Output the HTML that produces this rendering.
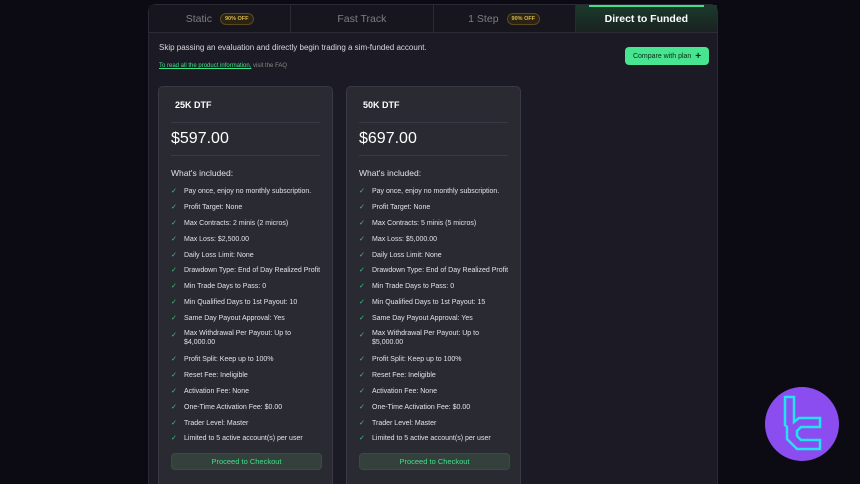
<!DOCTYPE html><html><head><style>
*{margin:0;padding:0;box-sizing:border-box}
html,body{width:860px;height:484px;overflow:hidden}
body{background:#0c0b13;font-family:"Liberation Sans",sans-serif;position:relative;color:#e6e6ea}
.panel{position:absolute;left:148px;top:4px;width:570px;height:490px;background:#1c1b25;border-radius:8px;border:1px solid #2a2a34}
.tabs{position:absolute;left:0;top:0;width:568px;height:28px;border-bottom:1px solid #2c2c36;display:flex}
.tab{flex:1;display:flex;align-items:center;justify-content:center;font-size:10.5px;color:#7d7d86;border-right:1px solid #2a2a33;background:#17161f}
.tab:last-child{border-right:none;color:#fff;font-weight:bold;background:linear-gradient(#1b3a2c,#1a2220);position:relative}
.tab:last-child:before{content:"";position:absolute;top:0;left:13px;right:13px;height:2px;background:#3fe08a}
.off{font-size:5.5px;color:#d9b84d;border:1px solid #5a4a1e;background:#2a2415;border-radius:8px;padding:2px 4px;margin-left:8px;font-weight:bold}
.desc{position:absolute;left:10px;top:38px;font-size:8px;color:#d8d8dd}
.faq{position:absolute;left:10px;top:58px;font-size:6px;color:#888}
.faq u{color:#3fe08a}
.cmp{position:absolute;left:476px;top:42px;width:84px;height:18px;background:#47e58f;border-radius:4px;color:#0d2a18;font-size:7px;display:flex;align-items:center;justify-content:center}
.card{position:absolute;top:86px;width:175px;height:420px;background:#2a2a33;border:1px solid #3a3a44;border-radius:5px}
.card h3{position:absolute;left:16px;top:13px;font-size:9px;color:#fff}
.hr{position:absolute;left:12px;right:12px;height:1px;background:#3a3a44}
.price{position:absolute;left:12px;top:43px;font-size:16px;color:#fff}
.inc{position:absolute;left:12px;top:81px;font-size:8.5px;color:#e0e0e4}
ul{position:absolute;left:12px;top:97px;width:158px;list-style:none}
li{font-size:7px;color:#e2e2e6;height:15.9px;line-height:15.9px;padding-left:13px;position:relative;white-space:nowrap}
li.two{height:25px;line-height:8.5px;padding-top:3px;white-space:normal}
li:before{content:"✓";position:absolute;left:0;top:0;color:#3fc77c;font-size:7px}
li.two:before{top:5px}
.btn{position:absolute;left:12px;top:366px;width:151px;height:17px;background:#34403b;border:1px solid #3e4a44;border-radius:4px;color:#3fe08a;font-size:7.5px;display:flex;align-items:center;justify-content:center}
.logo{position:absolute;left:765px;top:387px;width:74px;height:74px;border-radius:50%;background:#8b4cf0}
</style></head><body>
<div class="panel">
<div class="tabs"><div class="tab">Static<span class="off">90% OFF</span></div><div class="tab">Fast Track</div><div class="tab">1 Step<span class="off">90% OFF</span></div><div class="tab">Direct to Funded</div></div>
<div class="desc">Skip passing an evaluation and directly begin trading a sim-funded account.</div>
<div class="faq"><u>To read all the product information,</u> visit the FAQ</div>
<div class="cmp">Compare with plan &nbsp;<b style="font-size:10px">+</b></div>
</div>
<div class="card" style="left:158px"><h3>25K DTF</h3><div class="hr" style="top:35px"></div><div class="price">$597.00</div><div class="hr" style="top:68px"></div><div class="inc">What's included:</div>
<ul><li>Pay once, enjoy no monthly subscription.</li><li>Profit Target: None</li><li>Max Contracts: 2 minis (2 micros)</li><li>Max Loss: $2,500.00</li><li>Daily Loss Limit: None</li><li>Drawdown Type: End of Day Realized Profit</li><li>Min Trade Days to Pass: 0</li><li>Min Qualified Days to 1st Payout: 10</li><li>Same Day Payout Approval: Yes</li><li class="two">Max Withdrawal Per Payout: Up to<br>$4,000.00</li><li>Profit Split: Keep up to 100%</li><li>Reset Fee: Ineligible</li><li>Activation Fee: None</li><li>One-Time Activation Fee: $0.00</li><li>Trader Level: Master</li><li>Limited to 5 active account(s) per user</li></ul>
<div class="btn">Proceed to Checkout</div></div>
<div class="card" style="left:346px"><h3>50K DTF</h3><div class="hr" style="top:35px"></div><div class="price">$697.00</div><div class="hr" style="top:68px"></div><div class="inc">What's included:</div>
<ul><li>Pay once, enjoy no monthly subscription.</li><li>Profit Target: None</li><li>Max Contracts: 5 minis (5 micros)</li><li>Max Loss: $5,000.00</li><li>Daily Loss Limit: None</li><li>Drawdown Type: End of Day Realized Profit</li><li>Min Trade Days to Pass: 0</li><li>Min Qualified Days to 1st Payout: 15</li><li>Same Day Payout Approval: Yes</li><li class="two">Max Withdrawal Per Payout: Up to<br>$5,000.00</li><li>Profit Split: Keep up to 100%</li><li>Reset Fee: Ineligible</li><li>Activation Fee: None</li><li>One-Time Activation Fee: $0.00</li><li>Trader Level: Master</li><li>Limited to 5 active account(s) per user</li></ul>
<div class="btn">Proceed to Checkout</div></div>
<div class="logo"><svg width="74" height="74" viewBox="0 0 74 74"><path d="M20 10H29V35L34 31H55V40H36L32 44V49L36 53H55V62H32L22 52V40L20 38Z" fill="none" stroke="#22e4f0" stroke-width="2.5"/></svg></div>
</body></html>
